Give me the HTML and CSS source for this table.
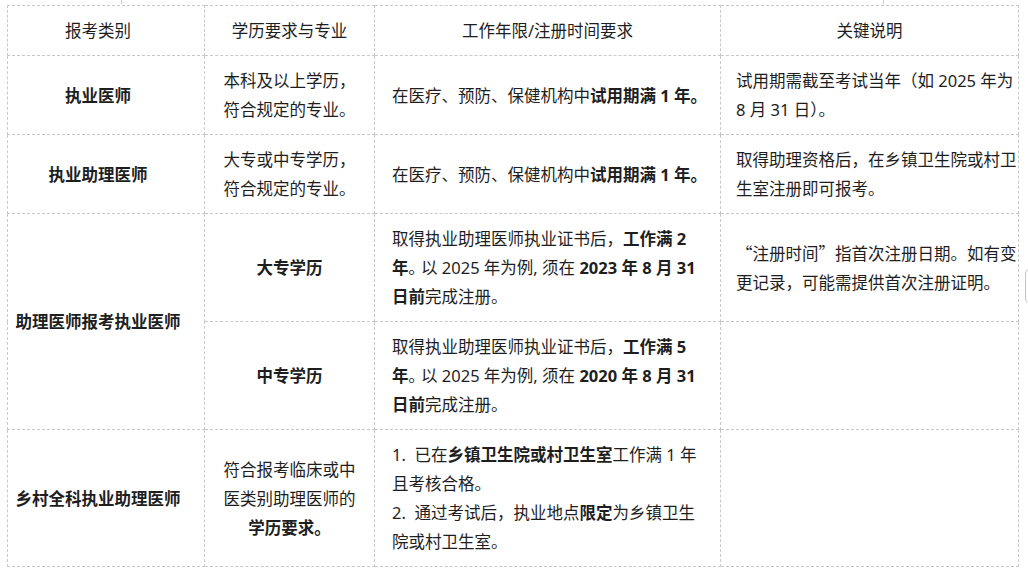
FILE: index.html
```html
<!DOCTYPE html>
<html lang="zh-CN">
<head>
<meta charset="utf-8">
<title>报考条件</title>
<link rel="stylesheet" href="styles.css">
</head>
<body>
<div class="page">
  <div class="prev"><span class="tick t1"></span><span class="tick t2"></span></div>
  <table class="req">
    <colgroup>
      <col class="c1"><col class="c2"><col class="c3"><col class="c4">
    </colgroup>
    <thead>
      <tr>
        <th class="cat">报考类别</th>
        <th>学历要求与专业</th>
        <th>工作年限/注册时间要求</th>
        <th>关键说明</th>
      </tr>
    </thead>
    <tbody>
      <tr>
        <td class="cat"><b>执业医师</b></td>
        <td class="edu">本科及以上学历，符合规定的专业。</td>
        <td class="work">在医疗、预防、保健机构中<b>试用期满 1 年。</b></td>
        <td class="note">试用期需截至考试当年（如 2025 年为 8 月 31 日）。</td>
      </tr>
      <tr>
        <td class="cat"><b>执业助理医师</b></td>
        <td class="edu">大专或中专学历，符合规定的专业。</td>
        <td class="work">在医疗、预防、保健机构中<b>试用期满 1 年。</b></td>
        <td class="note">取得助理资格后，在乡镇卫生院或村卫生室注册即可报考。</td>
      </tr>
      <tr>
        <td class="cat" rowspan="2"><b>助理医师报考执业医师</b></td>
        <td class="edu"><b>大专学历</b></td>
        <td class="work">取得执业助理医师执业证书后，<b>工作满 2</b><br><b>年</b>｡ 以 2025 年为例, 须在 <b>2023 年 8 月 31</b><br><b>日前</b>完成注册。</td>
        <td class="note cjk">“注册时间”指首次注册日期。如有变更记录，可能需提供首次注册证明。</td>
      </tr>
      <tr>
        <td class="edu"><b>中专学历</b></td>
        <td class="work">取得执业助理医师执业证书后，<b>工作满 5</b><br><b>年</b>｡ 以 2025 年为例, 须在 <b>2020 年 8 月 31</b><br><b>日前</b>完成注册。</td>
        <td class="note"></td>
      </tr>
      <tr>
        <td class="cat"><b>乡村全科执业助理医师</b></td>
        <td class="edu">符合报考临床或中医类别助理医师的<b>学历要求。</b></td>
        <td class="work">1.&nbsp; 已在<b>乡镇卫生院或村卫生室</b>工作满 1 年<br>且考核合格。<br>2.&nbsp; 通过考试后，执业地点<b>限定</b>为乡镇卫生<br>院或村卫生室。</td>
        <td class="note"></td>
      </tr>
    </tbody>
  </table>
</div>
<div class="side-handle"></div>
</body>
</html>
```

FILE: styles.css
```css
html, body {
  margin: 0;
  padding: 0;
  background: #ffffff;
}

body {
  font-family: "Noto Sans", "Noto Sans CJK SC", sans-serif;
  font-size: 16.5px;
  color: #1e1e1e;
}

.page {
  padding: 0 0 0 7px;
}

.prev {
  display: flex;
  height: 4px;
  margin-bottom: 1px;
}

.tick {
  width: 1px;
  background: #cfcfcf;
}

.t1 {
  margin-left: 114px;
}

.t2 {
  margin-left: 761px;
}

.req {
  border-collapse: collapse;
  table-layout: fixed;
  width: 1012px;
  line-height: 29px;
}

.c1 { width: 197px; }
.c2 { width: 170px; }
.c3 { width: 346px; }
.c4 { width: 298px; }

.req th,
.req td {
  border: 1px dashed #c9c9c9;
  padding: 10px 16px;
  vertical-align: middle;
}

.req th {
  font-weight: 400;
  text-align: center;
}

.req td.cat,
.req th.cat {
  text-align: center;
  padding-left: 6px;
  padding-right: 22px;
}

.req td.edu {
  text-align: center;
}

.req td.work {
  text-align: left;
  padding-left: 17px;
  padding-right: 6px;
  white-space: nowrap;
}

.req td.note {
  text-align: left;
  padding-left: 15px;
  padding-right: 0;
}

.req td.cjk {
  font-family: "Noto Sans CJK SC", sans-serif;
}

.req b {
  font-weight: 700;
}

.side-handle {
  position: fixed;
  left: 1025px;
  top: 268px;
  width: 20px;
  height: 34px;
  border: 1px solid #c4c4c4;
  border-radius: 6px;
  background: #fff;
}
```
